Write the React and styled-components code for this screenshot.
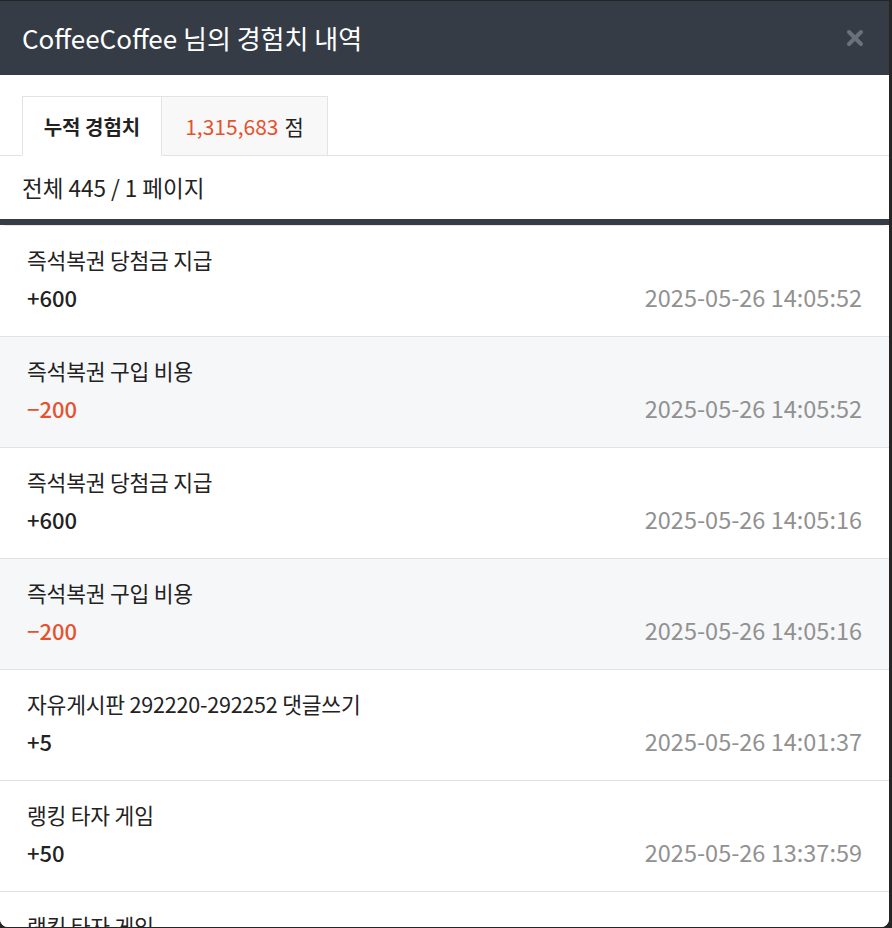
import React from "react";
import styled, { createGlobalStyle } from "styled-components";

const GlobalStyle = createGlobalStyle`
  html, body {
    margin: 0;
    padding: 0;
    background: #252525;
    font-family: "Noto Sans CJK KR", "Noto Sans", Roboto, sans-serif;
  }
  * { box-sizing: border-box; }
`;

const Page = styled.div`
  width: 892px;
  height: 928px;
  overflow: hidden;
  padding-top: 1px;
`;

const Modal = styled.div`
  width: 889px;
  height: 926px;
  background: #fff;
  display: flex;
  flex-direction: column;
  overflow: hidden;
  border-radius: 0 0 8px 8px;
`;

const Header = styled.div`
  height: 74px;
  flex: none;
  background: #363c46;
  display: flex;
  align-items: center;
  justify-content: space-between;
  padding: 0 24px 0 22px;
`;

const Title = styled.h1`
  margin: 0;
  font-size: 26px;
  line-height: 34px;
  font-weight: 400;
  color: #fff;
`;

const Close = styled.button`
  border: 0;
  background: none;
  padding: 0;
  width: 20px;
  height: 20px;
  display: flex;
  align-items: center;
  justify-content: center;
  cursor: pointer;
`;

const Tabs = styled.div`
  flex: none;
  display: flex;
  padding: 21px 22px 0;
  border-bottom: 1px solid #e3e3e3;
`;

const Tab = styled.div`
  height: 60px;
  margin-bottom: -1px;
  display: flex;
  align-items: center;
  justify-content: center;
  border: 1px solid #e3e3e3;
  border-left-width: ${(p) => (p.$active ? "1px" : "0")};
  border-bottom-color: ${(p) => (p.$active ? "#fff" : "#e3e3e3")};
  background: ${(p) => (p.$active ? "#fff" : "#f8f8f8")};
  font-size: ${(p) => (p.$active ? "20px" : "21px")};
  font-weight: ${(p) => (p.$active ? 700 : 400)};
  color: #222;
  width: ${(p) => (p.$active ? "140px" : "166px")};
  white-space: nowrap;
`;

const Points = styled.span`
  color: #e4532f;
  margin-right: 6px;
`;

const Summary = styled.div`
  flex: none;
  height: 63px;
  display: flex;
  align-items: center;
  padding: 0 22px 2px;
  font-size: 22.5px;
  color: #222;
`;

const Divider = styled.div`
  flex: none;
  height: 6px;
  background: #363c46;
`;

const List = styled.ul`
  flex: 1;
  margin: 0;
  padding: 0;
  list-style: none;
  border-radius: 6px 6px 0 0;
  border-top: 1px solid #e6e6e6;
  overflow: hidden;
`;

const Item = styled.li`
  height: 111px;
  padding: 20px 27px 0;
  border-bottom: 1px solid #e2e2e2;
  background: ${(p) => (p.$shade ? "#f6f7f9" : "#fff")};
`;

const ItemTitle = styled.div`
  font-size: 21.5px;
  line-height: 28px;
  color: #222;
  letter-spacing: -0.2px;
  white-space: nowrap;
`;

const ItemRow = styled.div`
  margin-top: 9px;
  display: flex;
  justify-content: space-between;
  align-items: center;
  line-height: 28px;
`;

const Amount = styled.span`
  font-size: 22px;
  font-weight: 500;
  color: ${(p) => (p.$minus ? "#e4532f" : "#222")};
`;

const Date = styled.span`
  font-size: 23.5px;
  font-weight: 400;
  color: #919191;
`;

const rows = [
  { title: "즉석복권 당첨금 지급", amount: "+600", date: "2025-05-26 14:05:52" },
  { title: "즉석복권 구입 비용", amount: "−200", date: "2025-05-26 14:05:52", minus: true },
  { title: "즉석복권 당첨금 지급", amount: "+600", date: "2025-05-26 14:05:16" },
  { title: "즉석복권 구입 비용", amount: "−200", date: "2025-05-26 14:05:16", minus: true },
  { title: "자유게시판 292220-292252 댓글쓰기", amount: "+5", date: "2025-05-26 14:01:37" },
  { title: "랭킹 타자 게임", amount: "+50", date: "2025-05-26 13:37:59" },
  { title: "랭킹 타자 게임", amount: "+50", date: "2025-05-26 13:37:20" },
];

export default function App() {
  return (
    <>
      <GlobalStyle />
      <Page>
        <Modal>
          <Header>
            <Title>CoffeeCoffee 님의 경험치 내역</Title>
            <Close aria-label="닫기">
              <svg width="18" height="18" viewBox="0 0 18 18">
                <path
                  d="M3 3 L15 15 M15 3 L3 15"
                  stroke="#6b717a"
                  strokeWidth="4"
                  strokeLinecap="round"
                />
              </svg>
            </Close>
          </Header>
          <Tabs>
            <Tab $active>누적 경험치</Tab>
            <Tab>
              <Points>1,315,683</Points>점
            </Tab>
          </Tabs>
          <Summary>전체 445 / 1 페이지</Summary>
          <Divider />
          <List>
            {rows.map((r, i) => (
              <Item key={i} $shade={i % 2 === 1 && i < 4}>
                <ItemTitle>{r.title}</ItemTitle>
                <ItemRow>
                  <Amount $minus={r.minus}>{r.amount}</Amount>
                  <Date>{r.date}</Date>
                </ItemRow>
              </Item>
            ))}
          </List>
        </Modal>
      </Page>
    </>
  );
}
